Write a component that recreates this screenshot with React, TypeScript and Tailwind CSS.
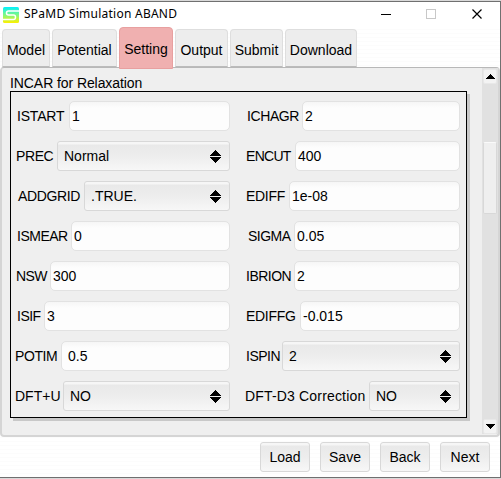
type FieldSpec = {
  label: string;
  value: string;
  kind: 'input' | 'choice';
  labelClass: string;
  valueClass: string;
};

const leftFields: FieldSpec[] = [
  { label: 'ISTART', value: '1', kind: 'input', labelClass: 'w-[58px] pl-[6px] tracking-[-0.2px]', valueClass: 'pl-[2px]' },
  { label: 'PREC', value: 'Normal', kind: 'choice', labelClass: 'w-[46px] pl-[5px] tracking-[-0.4px]', valueClass: 'pl-[6px]' },
  { label: 'ADDGRID', value: '.TRUE.', kind: 'choice', labelClass: 'w-[73px] pl-[7px] tracking-[-0.35px]', valueClass: 'pl-[6px]' },
  { label: 'ISMEAR', value: '0', kind: 'input', labelClass: 'w-[60px] pl-[6px] tracking-[-0.5px]', valueClass: 'pl-[2px]' },
  { label: 'NSW', value: '300', kind: 'input', labelClass: 'w-[39px] pl-[5px] tracking-[-0.6px]', valueClass: 'pl-[2px]' },
  { label: 'ISIF', value: '3', kind: 'input', labelClass: 'w-[33px] pl-[6px] tracking-[-0.5px]', valueClass: 'pl-[2px]' },
  { label: 'POTIM', value: '0.5', kind: 'input', labelClass: 'w-[50px] pl-[4px] tracking-[-0.4px]', valueClass: 'pl-[6px]' },
  { label: 'DFT+U', value: 'NO', kind: 'choice', labelClass: 'w-[52px] pl-[4px]', valueClass: 'pl-[6px]' },
];

const rightFields: FieldSpec[] = [
  { label: 'ICHAGR', value: '2', kind: 'input', labelClass: 'w-[61px] pl-[6px] tracking-[-0.4px]', valueClass: 'pl-[2px]' },
  { label: 'ENCUT', value: '400', kind: 'input', labelClass: 'w-[54px] pl-[5px] tracking-[-0.7px]', valueClass: 'pl-[2px]' },
  { label: 'EDIFF', value: '1e-08', kind: 'input', labelClass: 'w-[48px] pl-[5px] tracking-[-0.3px]', valueClass: 'pl-[2px]' },
  { label: 'SIGMA', value: '0.05', kind: 'input', labelClass: 'w-[53px] pl-[7px] tracking-[-0.5px]', valueClass: 'pl-[2px]' },
  { label: 'IBRION', value: '2', kind: 'input', labelClass: 'w-[53px] pl-[5px] tracking-[-0.5px]', valueClass: 'pl-[2px]' },
  { label: 'EDIFFG', value: '-0.015', kind: 'input', labelClass: 'w-[59px] pl-[5px] tracking-[-0.3px]', valueClass: 'pl-[2px]' },
  { label: 'ISPIN', value: '2', kind: 'choice', labelClass: 'w-[41px] pl-[5px] tracking-[-0.5px]', valueClass: 'pl-[6px]' },
  { label: 'DFT-D3 Correction', value: 'NO', kind: 'choice', labelClass: 'w-[128px] pl-[4px] tracking-[0.17px]', valueClass: 'pl-[6px]' },
];

const tabs = [
  { name: 'Model', width: 'w-[48px]' },
  { name: 'Potential', width: 'w-[65px]' },
  { name: 'Setting', width: 'w-[54px]', active: true },
  { name: 'Output', width: 'w-[53px]' },
  { name: 'Submit', width: 'w-[53px]' },
  { name: 'Download', width: 'w-[72px]' },
];

const raised =
  'rounded-[3px] border border-[#d8d8d8] bg-[linear-gradient(#f6f6f6_0,#f6f6f6_2px,#e9e9e9_3px,#ededed_50%,#f7f7f7_100%)]';

function Logo() {
  return (
    <svg width="16" height="16" viewBox="0 0 16 16" fill="none">
      <defs>
        <linearGradient id="logo" x1="0" y1="0" x2="0" y2="16" gradientUnits="userSpaceOnUse">
          <stop stopColor="#00f0ff" />
          <stop offset=".5" stopColor="#80f880" />
          <stop offset="1" stopColor="#fff000" />
        </linearGradient>
      </defs>
      <rect width="16" height="16" rx="1.5" fill="url(#logo)" />
      <path d="M16 4H5.5Q3.5 4 3.5 6T5.5 8H10.5Q12.5 8 12.5 10.2T10.5 12.5H0" stroke="#fff" strokeWidth="1.5" />
    </svg>
  );
}

function ChoiceArrows() {
  return (
    <svg className="mr-[8px] shrink-0" width="11" height="13" viewBox="0 0 11 13" shapeRendering="crispEdges">
      <path d="M5 0h1v1h1v1h1v1h1v1h1v1h1v1H0V5h1V4h1V3h1V2h1V1h1zM0 7h11v1h-1v1H9v1H8v1H7v1H6v1H5v-1H4v-1H3v-1H2V9H1V8H0z" />
    </svg>
  );
}

function Field({ label, value, kind, labelClass, valueClass }: FieldSpec) {
  return (
    <div className="flex h-[30px] items-center">
      <span className={`shrink-0 ${labelClass}`}>{label}</span>
      <div
        className={`flex h-[30px] min-w-0 flex-1 items-center justify-between ${
          kind === 'choice'
            ? raised
            : 'rounded-[5px] border border-[#e2e2e2] bg-[linear-gradient(#f6f6f6_0,#fdfdfd_6px)]'
        }`}
      >
        <span className={valueClass}>{value}</span>
        {kind === 'choice' && <ChoiceArrows />}
      </div>
    </div>
  );
}

function ScrollButton({ down }: { down?: boolean }) {
  return (
    <div className="flex h-[15px] w-[14px] shrink-0 items-center justify-center rounded-[2px] border border-[#e8e8e8] bg-[#f3f3f3]">
      <svg width="9" height="5" viewBox="0 0 9 5" shapeRendering="crispEdges">
        <path d={down ? 'M0 0h9v1H8v1H7v1H6v1H5v1H4V4H3V3H2V2H1V1H0z' : 'M4 0h1v1h1v1h1v1h1v1h1v1H0V4h1V3h1V2h1V1h1z'} />
      </svg>
    </div>
  );
}

export default function App() {
  return (
    <div className="flex h-[479px] w-[501px] flex-col overflow-hidden bg-[#d9d9d9] pt-px font-['Liberation_Sans',Arial,sans-serif] text-[14px] leading-[16px] whitespace-nowrap text-black">
      <div className="flex h-[477px] flex-col border-t border-r border-b border-[#707070] bg-[repeating-linear-gradient(#fff_0,#fff_3px,#fcfcfc_3px,#fcfcfc_4px)]">
        <header className="flex h-[25px] shrink-0 items-center bg-white pl-[3px]">
          <Logo />
          <span className="ml-[5px] -mt-px font-['Noto_Sans',sans-serif] text-[12px] tracking-[0.25px]">SPaMD Simulation ABAND</span>
          <svg className="-mt-px mr-[17px] ml-auto" width="103" height="12" viewBox="0 0 103 12" fill="none">
            <path d="M1 6.5h10" stroke="#000" />
            <rect x="46.5" y="1.5" width="9" height="9" stroke="#c8c8c8" />
            <path d="M92.5 1.5l9 9m0-9l-9 9" stroke="#000" strokeWidth="1.2" />
          </svg>
        </header>

        <nav className="z-10 -mb-[2px] flex h-[42px] shrink-0 items-end gap-[2px] pl-[2px]">
          {tabs.map((t) => (
            <div
              key={t.name}
              className={`flex justify-center rounded-t-[4px] border ${t.width} ${
                t.active
                  ? 'h-[42px] border-[#e8a0a0] bg-[#f0b0b0] pt-[13px]'
                  : 'mb-[2px] h-[38px] border-[#dedede] border-b-[#bbb] bg-[#ededed] pt-[12px]'
              }`}
            >
              {t.name}
            </div>
          ))}
        </nav>

        <main className="flex h-[370px] shrink-0 rounded-[4px] border-2 border-t border-[#d5d5d5] border-t-[#b8b8b8] bg-[#efefef]">
          <section className="flex flex-1 flex-col pl-[8px]">
            <h1 className="pt-[7px] text-[14px] leading-[16px] font-normal tracking-[-0.08px]">INCAR for Relaxation</h1>
            <div className="flex h-[327px] w-[457px] justify-between border border-black pt-[9px] pr-[6px] shadow-[3px_3px_0_#c8c8c8]">
              <div className="flex w-[219px] flex-col gap-[10px]">
                {leftFields.map((f) => (
                  <Field key={f.label} {...f} />
                ))}
              </div>
              <div className="flex w-[219px] flex-col gap-[10px]">
                {rightFields.map((f) => (
                  <Field key={f.label} {...f} />
                ))}
              </div>
            </div>
          </section>
          <aside className="mb-px flex w-[16px] shrink-0 flex-col items-center bg-[#e1e1e1] pt-px">
            <ScrollButton />
            <div className="mt-[58px] mb-auto h-[72px] w-[14px] rounded-[2px] border border-[#d8d8d8] border-t-[#fafafa] bg-[#efefef]" />
            <ScrollButton down />
          </aside>
        </main>

        <footer className="flex gap-[10px] pt-[5px] pl-[260px]">
          {['Load', 'Save', 'Back', 'Next'].map((name) => (
            <button key={name} className={`h-[30px] w-[50px] ${raised}`}>
              {name}
            </button>
          ))}
        </footer>
      </div>
    </div>
  );
}
